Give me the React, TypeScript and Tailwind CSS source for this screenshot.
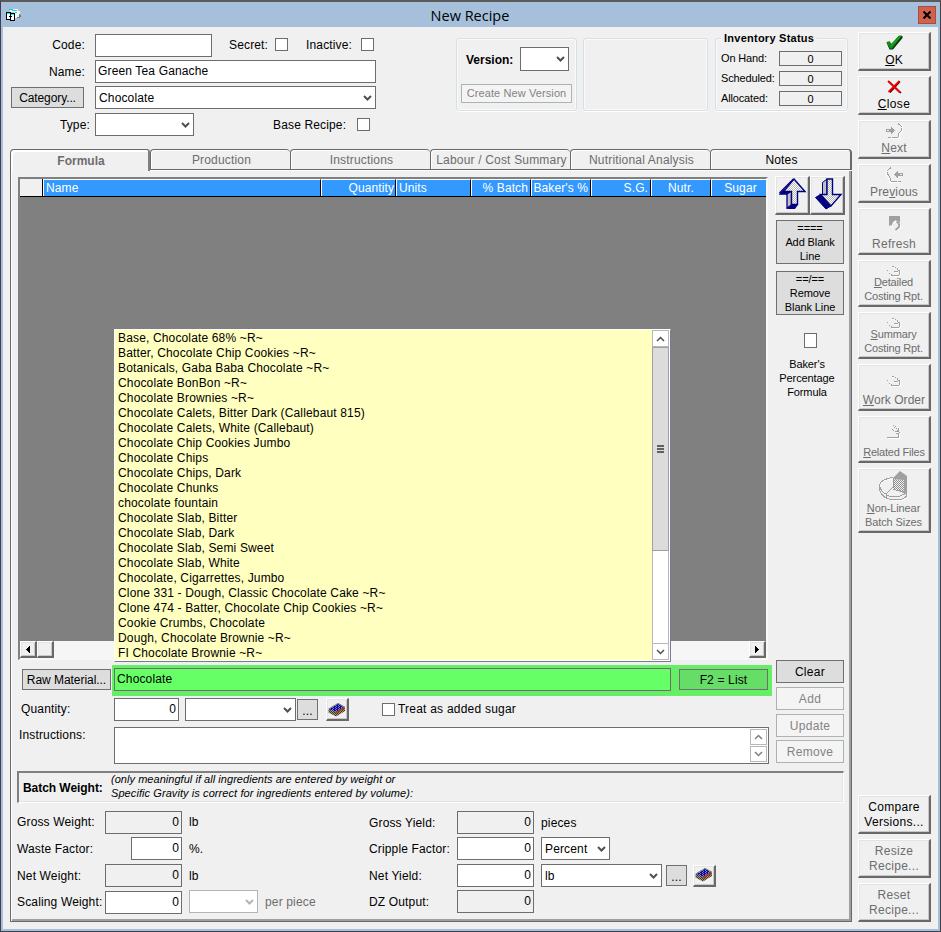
import React from 'react';

const ingredients = [
  'Base, Chocolate 68% ~R~',
  'Batter, Chocolate Chip Cookies ~R~',
  'Botanicals, Gaba Baba Chocolate ~R~',
  'Chocolate BonBon ~R~',
  'Chocolate Brownies ~R~',
  'Chocolate Calets, Bitter Dark (Callebaut 815)',
  'Chocolate Calets, White (Callebaut)',
  'Chocolate Chip Cookies Jumbo',
  'Chocolate Chips',
  'Chocolate Chips, Dark',
  'Chocolate Chunks',
  'chocolate fountain',
  'Chocolate Slab, Bitter',
  'Chocolate Slab, Dark',
  'Chocolate Slab, Semi Sweet',
  'Chocolate Slab, White',
  'Chocolate, Cigarrettes, Jumbo',
  'Clone 331 - Dough, Classic Chocolate Cake ~R~',
  'Clone 474 - Batter, Chocolate Chip Cookies ~R~',
  'Cookie Crumbs, Chocolate',
  'Dough, Chocolate Brownie ~R~',
  'FI Chocolate Brownie ~R~',
];

const columns = [
  { name: 'Name', className: 'w-[278px] pl-[2px]' },
  { name: 'Quantity', className: 'w-[75px] text-right pr-px' },
  { name: 'Units', className: 'w-[75px] pl-[2px]' },
  { name: '% Batch', className: 'w-[60px] text-right pr-[2px]' },
  { name: "Baker's %", className: 'w-[60px] text-right pr-[2px]' },
  { name: 'S.G.', className: 'w-[60px] text-right pr-[2px]' },
  { name: 'Nutr.', className: 'w-[60px] text-center' },
  { name: 'Sugar', className: 'w-[56px] text-center pl-[2px]' },
];

const tabs = ['Production', 'Instructions', 'Labour / Cost Summary', 'Nutritional Analysis', 'Notes'];

const RAISED =
  'border-t border-l border-t-white border-l-white border-r-2 border-b-2 border-r-[#696969] border-b-[#696969] bg-[#f0f0f0] shadow-[inset_1px_1px_0_#e3e3e3,inset_-1px_-1px_0_#c8c8c8]';

interface BoxProps {
  className?: string;
  children?: React.ReactNode;
}

function Field({ className = '', children }: BoxProps) {
  return (
    <div className={`shrink-0 border border-[#6d6d6d] h-[23px] leading-[20px] ${className}`}>
      {children}
    </div>
  );
}

function Chevron({ up = false, color = '#505050', thick = true }: { up?: boolean; color?: string; thick?: boolean }) {
  return (
    <svg width="9" height="6" viewBox="0 0 9 6" className={`shrink-0 ${up ? 'rotate-180' : ''}`}>
      <path d="M1 1L4.5 4.5L8 1" fill="none" stroke={color} strokeWidth={thick ? 2 : 1.5} />
    </svg>
  );
}

function Select({ className = '', children, disabled = false }: BoxProps & { disabled?: boolean }) {
  return (
    <div
      className={`shrink-0 flex items-center justify-between border bg-white h-[23px] pl-[3px] pr-[3px] ${
        disabled ? 'border-[#b4b4b4]' : 'border-[#6d6d6d]'
      } ${className}`}
    >
      <span className="pt-px">{children}</span>
      <Chevron color={disabled ? '#b4b4b4' : '#505050'} />
    </div>
  );
}

function Check({ className = '' }: BoxProps) {
  return <div className={`shrink-0 size-[13px] border border-[#6d6d6d] bg-white ${className}`} />;
}

function FlatButton({ className = '', children, disabled = false }: BoxProps & { disabled?: boolean }) {
  return (
    <div
      className={`shrink-0 flex items-center justify-center text-center border ${
        disabled ? 'border-[#adb2b5] bg-[#f4f4f4] text-[#838383]' : 'border-[#707070] bg-[#dddddd]'
      } ${className}`}
    >
      {children}
    </div>
  );
}

function SideButton({ className = '', children, disabled = true }: BoxProps & { disabled?: boolean }) {
  return (
    <div
      className={`shrink-0 w-[73px] flex flex-col items-center justify-end text-center ${RAISED} ${
        disabled ? 'text-[#6d6d6d]' : 'text-black'
      } ${className}`}
    >
      {children}
    </div>
  );
}

function Group({ className = '', children }: BoxProps) {
  return (
    <div className={`shrink-0 relative h-[73px] rounded-[3px] border border-[#d5dfe5] shadow-[inset_0_0_0_1px_#fafafa,0_1px_0_#fff] ${className}`}>
      {children}
    </div>
  );
}

function WindowIcon() {
  return (
    <svg width="16" height="14" viewBox="0 0 16 14" shapeRendering="crispEdges">
      <path d="M4 1h8v2h2v6h-3v1H8V4H4z" fill="#f4f4f4" />
      <path d="M3 1h4v1H3zM6 2h5v1H6zM9 4h2v1H9z" fill="#00d8e8" />
      <path d="M13 6h1v4h-3v-1h2zM14 7h1v2h-1z" fill="#777" />
      <path d="M0 4h5v1h4v8H4v-1H0z" fill="#000" />
      <path d="M1 6h3v5H1zM5 7h3v5H5z" fill="#fff" />
      <path d="M1 5h3v1H1zM5 6h3v1H5z" fill="#00ffff" />
      <path d="M3 8h3v1H3z" fill="#000" />
    </svg>
  );
}

function OkIcon() {
  return (
    <svg width="17" height="16" viewBox="0 0 17 16">
      <path d="M0.5 7.5L3.5 6.5L5.5 9L13 1H16.5V3L7 14.5H3.5Z" fill="#063806" />
      <path d="M0.5 7L3.5 6.3L5.3 9L13 0.5H16L6 13.5H4Z" fill="#109018" />
      <path d="M5 11L14.5 1.5" stroke="#36c040" strokeWidth="1" strokeDasharray="1 1" />
    </svg>
  );
}

function CloseIcon() {
  return (
    <svg width="15" height="14" viewBox="0 0 15 14">
      <path d="M2 1.5L14 13M13 1.5L3 12.5" stroke="#300" strokeWidth="1.4" />
      <path d="M1 1L13 12.5M12.5 1L1.5 12" stroke="#f00000" strokeWidth="1.8" />
    </svg>
  );
}

function NextIcon({ flip = false }: { flip?: boolean }) {
  return (
    <svg width="17" height="16" viewBox="0 0 17 16" className={flip ? '-scale-x-100' : ''} fill="none" shapeRendering="crispEdges">
      <path d="M3 15.5H13.5V12L16.5 8V4L13 1" stroke="#fff" />
      <path d="M2 14.5H12.5V11L15.5 7V3.5L12 0.5" stroke="#a0a0a0" strokeDasharray="3 0.6" />
      <path d="M0 6H5V3L9 7.5L5 12V9H0Z" fill="#a0a0a0" />
      <path d="M1 7.5H3" stroke="#f0f0f0" />
    </svg>
  );
}

function RefreshIcon() {
  return (
    <svg width="13" height="16" viewBox="0 0 13 16">
      <path d="M1 1H12V8L9.5 6Q6 6 5 12L3 10L1 11Z" fill="#a0a0a0" />
      <path d="M8 6.5Q12 8 11 12L7.5 15" stroke="#a0a0a0" strokeWidth="1.8" fill="none" />
      <path d="M4.5 12Q4.5 7 8.5 6" stroke="#fff" strokeWidth="1.4" fill="none" />
      <path d="M12.5 10V13L9 15.8" stroke="#fff" fill="none" />
    </svg>
  );
}

// embossed printer used by the report buttons
function PrintIcon() {
  return (
    <svg width="16" height="12" viewBox="0 0 16 12" shapeRendering="crispEdges">
      <path d="M1 5h1v1H1zM3 8h1v1H3zM5 9h1v1H5zM6 1h2v1H6zM9 2h1v1H9zM8 6h4v1H8zM11 3h1v2h-1zM12 5h2v1h-2zM13 6h1v4h-1zM5 10h8v1H5z" fill="#a0a0a0" />
      <path d="M6 2h2v1H6zM9 7h3v1H9zM12 4h1v1h-1zM14 6h1v5h-1zM5 11h9v1H5z" fill="#fff" />
    </svg>
  );
}

function FilesIcon() {
  return (
    <svg width="14" height="15" viewBox="0 0 14 15" shapeRendering="crispEdges">
      <path d="M6 0h1v1H6zM8 1h1v1H8zM7 2h1v1H7zM9 3h1v1H9zM10 5h1v1h-1zM5 4h1v1H5zM6 5h1v1H6zM8 6h4v1H8zM11 3h1v3h-1zM9 8h3v1H9zM12 7h1v1h-1zM11 9h1v3h-1zM0 12h12v1H0z" fill="#a0a0a0" />
      <path d="M12 9h1v5h-1zM1 13h11v1H1zM9 7h2v1H9zM12 3h1v2h-1z" fill="#fff" />
    </svg>
  );
}

function PieIcon() {
  return (
    <svg width="30" height="31" viewBox="0 0 30 31" fill="none">
      <defs>
        <pattern id="pie" width="2" height="2" patternUnits="userSpaceOnUse">
          <path d="M0 0h1v1H0zM1 1h1v1H1z" fill="#909090" shapeRendering="crispEdges" />
        </pattern>
      </defs>
      <path d="M14 7.5Q2 9 1.5 15V20Q4 29 15 30Q25 30 28 27V22" stroke="#fff" />
      <path d="M14 6.5Q2 8 0.5 14V19Q3 28 15 29Q24 29 27 25.5V21Q23 26 15 26Q10 26 7 23L14 16V6.5M0.5 15Q2 21 7 23V27M14 18L26 21.5" stroke="#a0a0a0" shapeRendering="crispEdges" />
      <path d="M14 7L21 0L28 5V22L25 24V9L14 8Z" fill="#a0a0a0" />
      <path d="M14 8L25 9V22L14 18Z" fill="url(#pie)" />
    </svg>
  );
}

function BasketIcon() {
  return (
    <svg width="18" height="15" viewBox="0 0 18 15">
      <defs>
        <pattern id="berries" width="3" height="2" patternUnits="userSpaceOnUse">
          <path d="M0 0h3v2H0z" fill="#7c84b4" />
          <path d="M0 0h2v1H0zM2 1h1v1H2zM0 1h1v1H0z" fill="#0808a8" shapeRendering="crispEdges" />
        </pattern>
        <pattern id="weave" width="2" height="2" patternUnits="userSpaceOnUse">
          <path d="M0 0h2v2H0z" fill="#a09880" />
          <path d="M0 0h1v1H0zM1 1h1v1H1z" fill="#383830" shapeRendering="crispEdges" />
        </pattern>
      </defs>
      <path d="M0.5 7L10 1L17 5V9L8 14.5L0.5 10.5Z" fill="url(#weave)" />
      <path d="M0.5 6.5L10 1L17 4.5L8 10.5Z" fill="#8c8a80" />
      <path d="M1.5 7L10 2L15.5 5L8 10Z" fill="url(#berries)" />
      <path d="M7.5 11L16.5 6" stroke="#b83810" strokeWidth="1.5" />
    </svg>
  );
}

function BigArrow({ down = false }: { down?: boolean }) {
  return (
    <svg width="28" height="32" viewBox="0 0 28 32" className="shrink-0">
      <defs>
        <pattern id="dots" width="2" height="2" patternUnits="userSpaceOnUse">
          <path d="M0 0h2v2H0z" fill="#fff" />
          <path d="M0 0h1v1H0zM1 1h1v1H1z" fill="#b8b8b8" shapeRendering="crispEdges" />
        </pattern>
      </defs>
      {down ? (
        <>
          <path d="M7.5 4.5L12 1V17H7.5Z" fill="#c0c0c0" stroke="#000080" />
          <path d="M0.5 19.5L5.5 16.5L16 28L11 31Z" fill="#000080" stroke="#000080" />
          <path d="M12 1H17.5V16.5H26L16 28L5.5 16.5H12Z" fill="url(#dots)" stroke="#000080" strokeWidth="1.4" />
        </>
      ) : (
        <>
          <path d="M8 16L12.5 13V27L8 30Z" fill="#c0c0c0" stroke="#000080" strokeWidth="1.3" />
          <path d="M0 16L5 11.5H12.5L8 16.8H0Z" fill="#000080" />
          <path d="M8.5 30.5L12.5 26.5H18.5L16 30.5Z" fill="#000080" stroke="#000080" />
          <path d="M15 1L26 13.5H18.5V26.5H12.5V13.5H4.5Z" fill="url(#dots)" stroke="#000080" strokeWidth="1.4" />
          <path d="M0.5 15L14.5 1" stroke="#000080" strokeWidth="1.4" />
        </>
      )}
    </svg>
  );
}

function Label({ className = '', children }: BoxProps) {
  return <span className={`shrink-0 whitespace-nowrap ${className}`}>{children}</span>;
}

function Stock({ label }: { label: string }) {
  return (
    <div className="flex items-center h-[15px] text-[11px] tracking-[-0.15px]">
      <Label className="w-[58px]">{label}</Label>
      <div className="w-[63px] h-[15px] border border-[#6d6d6d] text-center leading-[14px]">0</div>
    </div>
  );
}

function RecipeHeader() {
  return (
    <div className="flex h-[122px] pt-[7px] pl-2">
      <div className="w-[365px] shrink-0">
        <div className="flex items-center h-[22px]">
          <Label className="w-[74px] text-right">Code:</Label>
          <Field className="ml-[10px] w-[117px] h-[22px] bg-white" />
          <Label className="ml-[17px] w-[39px]">Secret:</Label>
          <Check className="ml-[7px] -mt-px" />
          <Label className="ml-[18px] w-[46px]">Inactive:</Label>
          <Check className="ml-[9px] -mt-px" />
        </div>
        <div className="flex items-center h-[22px] mt-1">
          <Label className="w-[74px] text-right pt-[2px]">Name:</Label>
          <Field className="ml-[10px] w-[281px] h-[22px] bg-white pl-[2px]">Green Tea Ganache</Field>
        </div>
        <div className="flex items-center h-[23px] mt-1">
          <FlatButton className="w-[73px] h-[21px] pt-px tracking-[-0.1px]">Category...</FlatButton>
          <Select className="ml-[11px] w-[281px]">Chocolate</Select>
        </div>
        <div className="flex items-center h-[23px] mt-1">
          <Label className="w-[79px] text-right pt-[2px]">Type:</Label>
          <Select className="ml-[5px] w-[99px]" />
          <Label className="ml-[79px] w-[74px] pt-[2px]">Base Recipe:</Label>
          <Check className="ml-[10px]" />
        </div>
      </div>
      <div className="flex ml-20 pt-1 gap-[6px]">
        <Group className="w-[121px] pt-2 pl-1">
          <div className="flex items-center">
            <Label className="w-[59px] pl-[5px] pt-[2px] font-bold tracking-normal">Version:</Label>
            <Select className="w-[49px] h-[24px]" />
          </div>
          <FlatButton disabled className="mt-[13px] w-[111px] h-[19px] text-[11px] tracking-[0.1px]">
            Create New Version
          </FlatButton>
        </Group>
        <Group className="w-[125px]" />
        <Group className="ml-[1px] w-[133px] pl-[5px] pt-3">
          <span className="absolute -top-[8px] left-[5px] px-[3px] bg-[#f0f0f0] font-bold text-[11px] tracking-[0.25px] leading-[15px] whitespace-nowrap">
            Inventory Status
          </span>
          <div className="flex flex-col gap-[5px]">
            <Stock label="On Hand:" />
            <Stock label="Scheduled:" />
            <Stock label="Allocated:" />
          </div>
        </Group>
      </div>
    </div>
  );
}

function TabStrip() {
  return (
    <div className="flex h-[22px] ml-[7px] w-[842px]">
      <div className="w-[140px] shrink-0 h-[22px] rounded-tl-[4px] rounded-tr-[3px] border-t border-l border-[#696969] border-r-2 border-r-[#808080] shadow-[inset_2px_2px_0_#fff] text-center pl-[3px] font-bold text-[#6d6d6d] leading-[22px] tracking-normal">
        Formula
      </div>
      {tabs.map((tab) => (
        <div key={tab} className="w-[140px] shrink-0 last:w-[142px] h-[22px] border-b-2 border-b-white">
          <div
            className={`h-[21px] -mb-px rounded-t-[4px] border border-[#696969] shadow-[inset_1px_1px_0_#fff] text-center leading-[20px] whitespace-nowrap tracking-[0.18px] pl-[2px] ${
              tab === 'Notes' ? 'text-black border-r-2' : 'text-[#6d6d6d] border-r-0'
            }`}
          >
            {tab}
          </div>
        </div>
      ))}
    </div>
  );
}

function MatchList() {
  return (
    <div className="absolute left-[94px] top-[150px] w-[557px] h-[333px] border border-t-white border-l-white border-r-[#787c90] border-b-[#787c90] bg-white pr-px flex">
      <div className="flex-1 h-[330px] bg-[#ffffc0] pl-[3px]">
        {ingredients.map((name) => (
          <div key={name} className="h-[15px] leading-[17px] whitespace-nowrap tracking-[0.15px]">
            {name}
          </div>
        ))}
      </div>
      <div className="w-[17px] h-[330px] flex flex-col border border-[#b8b8b8] border-y-0 bg-white">
        <div className="h-[17px] border-y border-[#b8b8b8] flex items-center justify-center">
          <Chevron up thick={false} />
        </div>
        <div className="h-[204px] -mx-px bg-[#dcdcdc] border border-[#a0a0a0] flex flex-col items-center justify-center gap-px">
          <div className="w-[7px] h-[2px] bg-[#606060]" />
          <div className="w-[7px] h-[2px] bg-[#606060]" />
          <div className="w-[7px] h-[2px] bg-[#606060]" />
        </div>
        <div className="flex-1" />
        <div className="h-[17px] border-y border-[#b8b8b8] flex items-center justify-center">
          <Chevron thick={false} />
        </div>
      </div>
    </div>
  );
}

function FormulaGrid() {
  return (
    <div className="w-[750px] h-[483px] border-t-2 border-l-2 border-t-[#808080] border-l-[#808080] border-r-2 border-b border-r-[#f8f8f8] border-b-[#f8f8f8] relative flex flex-col bg-[#808080]">
      <div className="flex h-[18px] border-b border-black text-white bg-[#3399ff]">
        <div className="w-[23px] shrink-0 border-r border-r-black bg-[#f0f0f0]" />
        {columns.map((col) => (
          <div
            key={col.name}
            className={`shrink-0 border-t border-l border-t-white border-l-white border-r border-r-black leading-[17px] whitespace-nowrap tracking-[0.1px] last:border-r-0 ${col.className}`}
          >
            {col.name}
          </div>
        ))}
      </div>
      <div className="flex-1" />
      <div className="flex h-[18px] bg-[#f6f6f6] pb-px">
        <div className={`w-[17px] flex items-center justify-center pr-px ${RAISED}`}>
          <svg width="4" height="7" viewBox="0 0 4 7" shapeRendering="crispEdges"><path d="M4 0V7L0 3.5Z" /></svg>
        </div>
        <div className={`w-[17px] ${RAISED}`} />
        <div className="flex-1" />
        <div className={`w-[17px] flex items-center justify-center ${RAISED}`}>
          <svg width="4" height="7" viewBox="0 0 4 7" shapeRendering="crispEdges"><path d="M0 0V7L4 3.5Z" /></svg>
        </div>
      </div>
      <MatchList />
    </div>
  );
}

function LineTools() {
  return (
    <div className="w-[70px] ml-[7px] -mt-px text-[11px] tracking-[-0.1px] leading-[14px]">
      <div className="flex h-[39px]">
        <div className={`w-[35px] pl-[3px] pt-px ${RAISED}`}><BigArrow /></div>
        <div className={`w-[35px] pl-[4px] pt-px ${RAISED}`}><BigArrow down /></div>
      </div>
      <FlatButton className="ml-px mt-[5px] w-[68px] h-[44px]">
        <div>====<br />Add Blank<br />Line</div>
      </FlatButton>
      <FlatButton className="ml-px mt-[7px] w-[68px] h-[44px]">
        <div>==/==<br />Remove<br />Blank Line</div>
      </FlatButton>
      <Check className="ml-[29px] mt-[18px] h-[15px]" />
      <div className="mt-[9px] -ml-[5px] w-[74px] text-center">
        Baker's<br />Percentage<br />Formula
      </div>
    </div>
  );
}

function EntryArea() {
  return (
    <div className="flex h-[111px]">
      <div className="w-[764px] shrink-0">
        <div className="flex h-[31px] mt-[5px] pl-[11px]">
          <FlatButton className="w-[89px] h-[21px] mt-1 pt-px tracking-[-0.05px]">Raw Material...</FlatButton>
          <div className="ml-px w-[660px] h-[31px] bg-[#66ee66] flex items-start pt-[3px] pl-[2px]">
            <Field className="w-[557px] bg-[#66ff66] pl-[2px]">Chocolate</Field>
            <FlatButton className="ml-2 mt-px w-[89px] h-[21px] pt-px bg-[#66dd66]!">F2 = List</FlatButton>
          </div>
        </div>
        <div className="flex items-center h-[23px] mt-[2px] pl-[10px]">
          <Label className="w-[93px]">Quantity:</Label>
          <Field className="w-[65px] bg-white text-right pr-[2px]">0</Field>
          <Select className="ml-[6px] w-[111px]" />
          <FlatButton className="ml-px w-[21px] h-[21px] pt-1">...</FlatButton>
          <div className={`ml-2 w-[23px] h-[23px] flex items-center justify-center ${RAISED}`}><BasketIcon /></div>
          <Check className="ml-[33px] -mt-px" />
          <Label className="ml-[3px] tracking-[0.22px]">Treat as added sugar</Label>
        </div>
        <div className="flex h-[37px] mt-[6px] pl-2">
          <Label className="w-[95px] pt-px">Instructions:</Label>
          <Field className="w-[655px] h-[37px] bg-white flex justify-end p-px">
            <div className="w-[17px] h-[33px] flex flex-col justify-between">
              <div className="h-4 border border-[#b8b8b8] flex items-center justify-center"><Chevron up thick={false} color="#808080" /></div>
              <div className="h-4 border border-[#b8b8b8] flex items-center justify-center"><Chevron thick={false} color="#808080" /></div>
            </div>
          </Field>
        </div>
      </div>
      <div className="pl-px flex flex-col gap-1 tracking-[0.3px]">
        <FlatButton className="w-[68px] h-[23px] pt-px">Clear</FlatButton>
        <FlatButton disabled className="w-[68px] h-[23px] pt-px">Add</FlatButton>
        <FlatButton disabled className="w-[68px] h-[23px] pt-px">Update</FlatButton>
        <FlatButton disabled className="w-[68px] h-[23px] pt-px -mt-px">Remove</FlatButton>
      </div>
    </div>
  );
}

function BatchWeight() {
  return (
    <>
      <div className="ml-[6px] w-[827px] h-[32px] border-t-2 border-l-2 border-t-[#808080] border-l-[#808080] border-r border-b border-r-white border-b-white shadow-[inset_-1px_-1px_0_#e3e3e3] flex items-center">
        <Label className="w-[92px] pl-1 pt-[2px] font-bold tracking-[-0.05px]">Batch Weight:</Label>
        <div className="italic text-[11px] leading-[14px] -mt-[3px] whitespace-nowrap">
          <div className="tracking-[0.04px]">(only meaningful if all ingredients are entered by weight or</div>
          <div className="tracking-[0.08px]">Specific Gravity is correct for ingredients entered by volume):</div>
        </div>
      </div>
      <div className="flex pl-[6px] pt-2">
        <div className="w-[352px] flex flex-col gap-1">
          <div className="flex items-center h-[23px]">
            <Label className="w-[88px]">Gross Weight:</Label>
            <Field className="w-[77px] text-right pr-[2px]">0</Field>
            <Label className="ml-[7px]">lb</Label>
          </div>
          <div className="flex items-center h-[23px] -mt-px">
            <Label className="w-[114px] pt-[2px]">Waste Factor:</Label>
            <Field className="w-[51px] bg-white text-right pr-[2px]">0</Field>
            <Label className="ml-[7px] pt-[2px]">%.</Label>
          </div>
          <div className="flex items-center h-[23px]">
            <Label className="w-[88px] pt-[2px]">Net Weight:</Label>
            <Field className="w-[77px] text-right pr-[2px]">0</Field>
            <Label className="ml-[7px] pt-[2px]">lb</Label>
          </div>
          <div className="flex h-[23px] -mt-px">
            <Label className="w-[88px] pt-[5px]">Scaling Weight:</Label>
            <Field className="w-[77px] mt-px bg-white text-right pr-[2px]">0</Field>
            <Select disabled className="ml-[7px] w-[69px]" />
            <Label className="ml-[7px] pt-[5px] text-[#6d6d6d]">per piece</Label>
          </div>
        </div>
        <div className="flex flex-col gap-1">
          <div className="flex items-center h-[23px]">
            <Label className="w-[88px] pt-px">Gross Yield:</Label>
            <Field className="w-[77px] text-right pr-[2px]">0</Field>
            <Label className="ml-[7px] pt-px">pieces</Label>
          </div>
          <div className="flex items-center h-[23px] -mt-px">
            <Label className="w-[88px] pt-[2px]">Cripple Factor:</Label>
            <Field className="w-[77px] bg-white text-right pr-[2px]">0</Field>
            <Select className="ml-[7px] w-[69px]">Percent</Select>
          </div>
          <div className="flex items-center h-[23px]">
            <Label className="w-[88px] pt-[2px]">Net Yield:</Label>
            <Field className="w-[77px] bg-white text-right pr-[2px]">0</Field>
            <Select className="ml-[7px] w-[121px]">lb</Select>
            <FlatButton className="ml-1 w-[21px] h-[21px] pt-1">...</FlatButton>
            <div className={`ml-[6px] w-[23px] h-[22px] flex items-center justify-center pb-px ${RAISED}`}><BasketIcon /></div>
          </div>
          <div className="flex items-center h-[23px] -mt-px">
            <Label className="w-[88px] pt-[2px]">DZ Output:</Label>
            <Field className="w-[77px] text-right pr-[2px]">0</Field>
          </div>
        </div>
      </div>
    </>
  );
}

function Sidebar() {
  return (
    <div className="w-[73px] ml-[6px] pt-[5px] pb-[7px] flex flex-col gap-[5px]">
      <SideButton disabled={false} className="h-[39px] pb-px"><OkIcon /><div className="mt-[2px] leading-[15px]"><u>O</u>K</div></SideButton>
      <SideButton disabled={false} className="h-[39px] pb-px tracking-[0.4px]"><CloseIcon /><div className="mt-[3px] leading-[15px]"><u>C</u>lose</div></SideButton>
      <SideButton className="h-[39px] pb-px"><NextIcon /><div className="mt-[2px] leading-[15px]"><u>N</u>ext</div></SideButton>
      <SideButton className="h-[39px] pb-px"><NextIcon flip /><div className="mt-[2px] leading-[15px]">Pre<u>v</u>ious</div></SideButton>
      <SideButton className="h-[47px] pb-px"><RefreshIcon /><div className="mt-[6px] leading-[15px] tracking-[0.3px]">Refresh</div></SideButton>
      <SideButton className="h-[47px] pb-[2px] text-[11px] tracking-[-0.15px] leading-[14px]"><PrintIcon /><div className="-mt-[2px] -ml-px"><u>D</u>etailed<br />Costing Rpt.</div></SideButton>
      <SideButton className="h-[47px] pb-[2px] text-[11px] tracking-[-0.15px] leading-[14px]"><PrintIcon /><div className="-mt-[2px] -ml-px"><u>S</u>ummary<br />Costing Rpt.</div></SideButton>
      <SideButton className="h-[47px] pb-px"><PrintIcon /><div className="mt-[6px] leading-[15px] tracking-[0.05px]"><u>W</u>ork Order</div></SideButton>
      <SideButton className="h-[47px] pb-[2px] text-[11px]"><FilesIcon /><div className="mt-[5px] leading-[14px] tracking-[-0.2px]"><u>R</u>elated Files</div></SideButton>
      <SideButton className="h-[65px] pb-[2px] text-[11px] tracking-[-0.1px] leading-[14px]"><PieIcon /><div className="-mt-px -ml-px"><u>N</u>on-Linear<br />Batch Sizes</div></SideButton>
      <div className="flex-1" />
      <SideButton disabled={false} className="h-[39px] pb-[2px] tracking-[0.3px]"><div>Compare<br />Versions...</div></SideButton>
      <SideButton className="h-[39px] pb-[2px] tracking-[0.3px]"><div>Resize<br />Recipe...</div></SideButton>
      <SideButton className="h-[39px] pb-[2px] tracking-[0.3px]"><div>Reset<br />Recipe...</div></SideButton>
    </div>
  );
}

export default function App() {
  return (
    <div className="w-[941px] h-[932px] overflow-hidden border border-[#404048] border-t-2 border-t-[#5a5a5a] bg-[#a6c0dc] px-[2px] pb-[2px] font-['Liberation_Sans',Arial,sans-serif] text-[12px] leading-[15px] tracking-[0.15px] text-black">
      <div className="h-[25px] flex items-start">
        <div className="pl-[3px] pt-[6px]"><WindowIcon /></div>
        <div className="flex-1 text-center font-['Open_Sans',sans-serif] text-[14.5px] leading-[27px] tracking-normal">New Recipe</div>
        <div className="w-[18px] h-[18px] mt-1 mr-[2px] bg-[#d0614d] border border-[#a84c40] flex items-center justify-center">
          <svg width="8" height="8" viewBox="0 0 8 8"><path d="M0.5 0.5L7.5 7.5M7.5 0.5L0.5 7.5" stroke="#000" strokeWidth="2" /></svg>
        </div>
      </div>
      <div className="h-[902px] bg-[#f0f0f0] flex">
        <div className="w-[849px] shrink-0">
          <RecipeHeader />
          <TabStrip />
          <div className="ml-[7px] w-[842px] h-[751px] border-l border-l-[#696969] border-r border-b border-r-[#696969] border-b-[#696969] shadow-[inset_1px_0_0_#fff,inset_-2px_-2px_0_#a0a0a0]">
            <div className="flex h-[489px] pt-[6px] pl-[7px]">
              <FormulaGrid />
              <LineTools />
            </div>
            <EntryArea />
            <BatchWeight />
          </div>
        </div>
        <Sidebar />
      </div>
    </div>
  );
}
